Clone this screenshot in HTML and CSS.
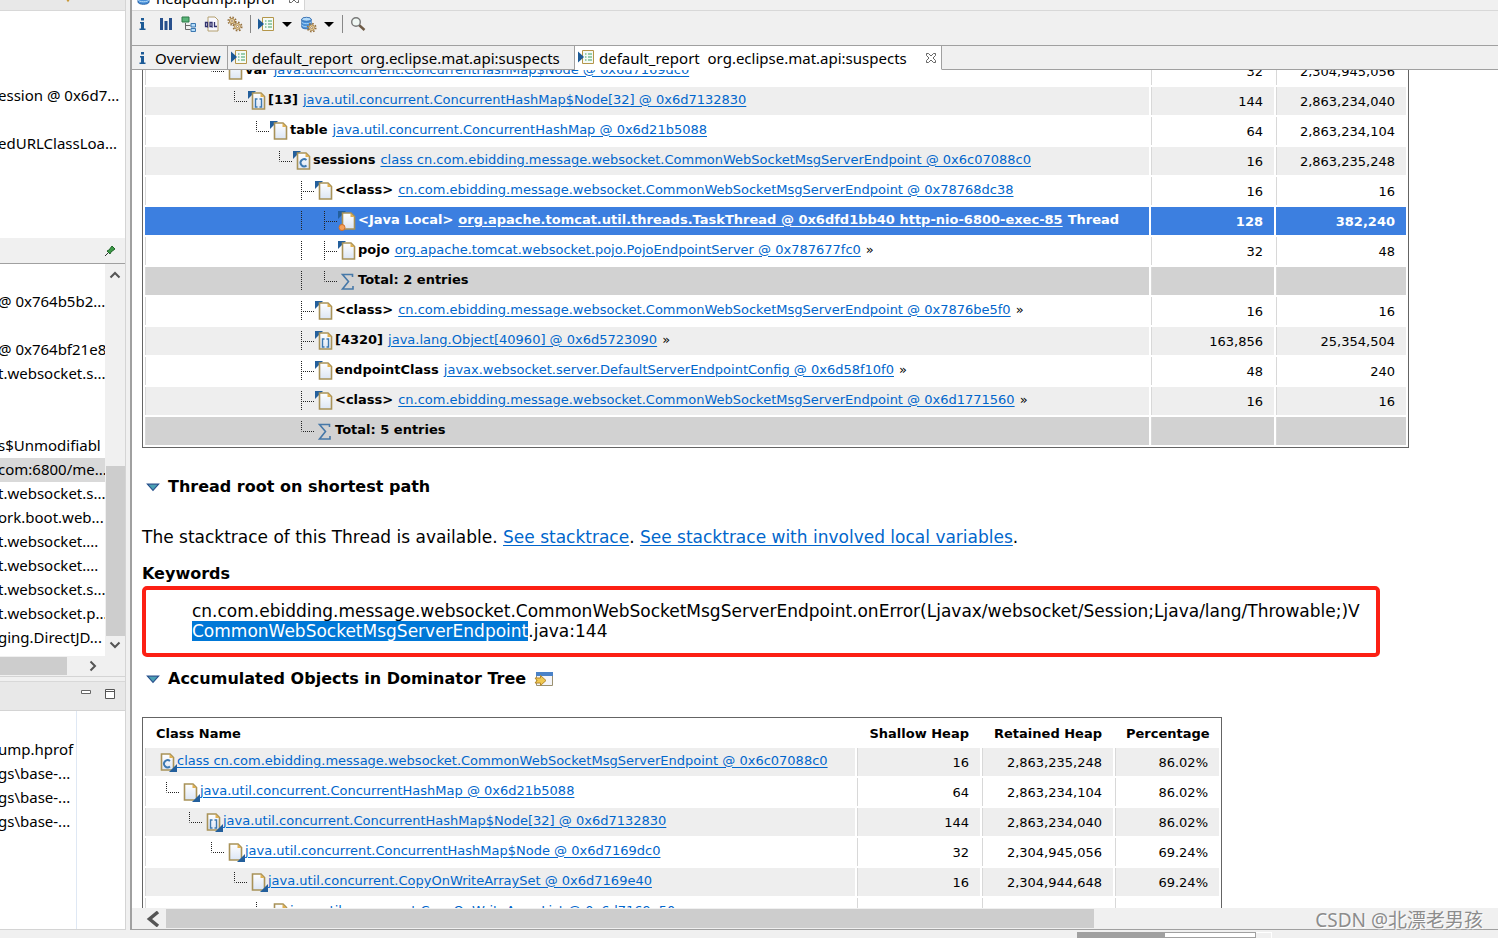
FILE: index.html
```html
<!DOCTYPE html>
<html lang="en">
<head>
<meta charset="utf-8">
<title>heapdump.hprof</title>
<link rel="stylesheet" href="styles.css">
</head>
<body>
<svg class="defs" aria-hidden="true">
  <defs>
    <linearGradient id="paper" x1="0" y1="0" x2="0" y2="1"><stop offset="0" stop-color="#fff"/><stop offset="1" stop-color="#dce6f5"/></linearGradient>
    <symbol id="page" viewBox="0 0 14 18"><path d="M1 1h8.500l3.500 3.500v12.500h-12z" fill="url(#paper)" stroke="#a89258" stroke-width="1.600"/><path d="M9 1v4h4z" fill="#e0b050"/></symbol>
    <symbol id="in" viewBox="0 0 20 20"><path d="M0 0h8L0 8z" fill="#235f9c"/><use href="#page" x="3" y="1" width="15" height="18"/></symbol>
    <symbol id="in-arr" viewBox="0 0 20 20"><use href="#in" width="20" height="20"/><path d="M9.500 8h-2v8h2M11.500 8h2v8h-2" fill="none" stroke="#3c78b0" stroke-width="1.400"/></symbol>
    <symbol id="in-cls" viewBox="0 0 20 20"><use href="#in" width="20" height="20"/><path d="M13.500 9a3.600 3.600 0 1 0 0 5.500" fill="none" stroke="#3c78b0" stroke-width="1.900"/></symbol>
    <symbol id="in-loc" viewBox="0 0 20 20"><use href="#in" width="20" height="20"/><circle cx="4" cy="16.500" r="3" fill="#f4a05a" stroke="#d0702a"/></symbol>
    <symbol id="out" viewBox="0 0 20 20"><use href="#page" x="3" y="1" width="15" height="18"/><path d="M20 12v8h-8z" fill="#235f9c"/></symbol>
    <symbol id="out-arr" viewBox="0 0 20 20"><use href="#out" width="20" height="20"/><path d="M9.500 8h-2v8h2M11.500 8h2v8h-2" fill="none" stroke="#3c78b0" stroke-width="1.400"/></symbol>
    <symbol id="out-cls" viewBox="0 0 20 20"><use href="#out" width="20" height="20"/><path d="M13 9a3.600 3.600 0 1 0 0 5.500" fill="none" stroke="#3c78b0" stroke-width="1.900"/></symbol>
    <symbol id="sum" viewBox="0 0 20 20"><path d="M14.500 6V3.500H4.500l6 7-6 7.500h10.500v-3" fill="none" stroke="#4678a8" stroke-width="1.600"/></symbol>
    <symbol id="ell" viewBox="0 0 14 20"><path d="M.5 0v10.500M2 10.500h12" fill="none" stroke="#222" stroke-dasharray="1 1"/></symbol>
    <symbol id="tee" viewBox="0 0 14 20"><path d="M.5 0v20M2 10.500h12" fill="none" stroke="#222" stroke-dasharray="1 1"/></symbol>
    <symbol id="bar" viewBox="0 0 23 20"><path d="M.5 0v20" fill="none" stroke="#222" stroke-dasharray="1 1"/></symbol>
    <symbol id="info" viewBox="0 0 16 16"><path d="M6 2h3v2.500H6zM5 6h4v6.500h1.500V14h-6v-1.500H6v-5H5z" fill="#1c5a96"/></symbol>
    <symbol id="report" viewBox="0 0 17 16"><path d="M4.500 1h11v13h-11z" fill="#f4faf6" stroke="#b4964a"/><path d="M0 2l6 5.500L0 13z" fill="#1c5a96"/><path d="M7 4.500h1.500M10 4.500h4M7 7.500h1.500M10 7.500h4M7 10.500h1.500M10 10.500h4" stroke="#3ca064"/></symbol>
    <symbol id="db" viewBox="0 0 16 16"><path d="M2 3v9c0 3 11 3 11 0V3" fill="#4a90d8" stroke="#2864aa"/><path d="M2 6c0 3 11 3 11 0M2 9.500c0 3 11 3 11 0" fill="none" stroke="#b4dcfa"/><ellipse cx="7.500" cy="3.200" rx="5.500" ry="2.300" fill="#b4dcfa" stroke="#2864aa"/></symbol>
    <symbol id="gear" viewBox="0 0 12 12"><circle cx="6" cy="6" r="4.600" fill="none" stroke="#96703c" stroke-width="1.800" stroke-dasharray="1.800 1.812"/><circle cx="6" cy="6" r="3.200" fill="#f0dcaa" stroke="#a0783c"/><circle cx="6" cy="6" r="1.200" fill="#fff" stroke="#8c643c" stroke-width=".8"/></symbol>
    <symbol id="close" viewBox="0 0 12 12"><path d="M1.500 1.500h2L6 4l2.500-2.500h2v2L8 6l2.500 2.500v2h-2L6 8l-2.500 2.500h-2v-2L4 6 1.500 3.500z" fill="#fff" stroke="#555" stroke-width=".9"/></symbol>
    <symbol id="twist" viewBox="0 0 12 8"><path d="M1 1h10L6 6.500z" fill="#4aa0b4" stroke="#28508c"/></symbol>
    <symbol id="chev" viewBox="0 0 12 12"><path d="M1.500 8.500L6 4l4.500 4.500" fill="none" stroke="#555" stroke-width="2"/></symbol>
  </defs>
</svg>
<div class="app">
  <aside class="side">
    <div class="side-cap"><svg class="cap-mark" viewBox="0 0 6 4"><path d="M1 0h4l-2 3z" fill="#c89632"/></svg></div>
    <ul class="list top-list">
      <li>ession @ 0x6d7...</li><li></li><li>edURLClassLoa...</li>
    </ul>
    <div class="side-bar"><button class="tool" aria-label="Pin"><svg class="i12" viewBox="0 0 12 12"><path d="M1 11l4-4" stroke="#333"/><path d="M3 6l2-1 3-4 3 3-4 3-1 2z" fill="#3c9a46" stroke="#1e6428"/></svg></button></div>
    <div class="tree">
      <ul class="list mid-list">
        <li>@ 0x764b5b2...</li><li></li><li>@ 0x764bf21e8</li><li>t.websocket.s...</li><li></li><li></li><li>s$Unmodifiabl</li><li class="on">com:6800/me...</li><li>t.websocket.s...</li><li>ork.boot.web...</li><li>t.websocket....</li><li>t.websocket....</li><li>t.websocket.s...</li><li>t.websocket.p...</li><li>ging.DirectJD...</li>
      </ul>
      <div class="vscroll"><svg class="i12"><use href="#chev"/></svg><div class="vthumb"></div><svg class="i12 down"><use href="#chev"/></svg></div>
    </div>
    <div class="hscroll"><div class="hthumb"></div><svg class="i12 right"><use href="#chev"/></svg></div>
    <div class="side-bar low">
      <button class="tool" aria-label="Minimize"><svg class="i12" viewBox="0 0 12 12"><path d="M1.500 2.500h9v3h-9z" fill="#fff" stroke="#666"/></svg></button>
      <button class="tool" aria-label="Maximize"><svg class="i12" viewBox="0 0 12 12"><path d="M1.500 1.500h9v9h-9zM1.500 3.500h9" fill="#fff" stroke="#555"/></svg></button>
    </div>
    <div class="files">
      <ul class="list low-list"><li>ump.hprof</li><li>gs\base-...</li><li>gs\base-...</li><li>gs\base-...</li></ul>
      <div></div>
    </div>
  </aside>
  <main class="main">
    <div class="editor-tabs">
      <div class="editor-tab"><svg class="i16"><use href="#db"/></svg><span>heapdump.hprof</span><svg class="i12"><use href="#close"/></svg></div>
    </div>
    <div class="toolbar">
      <button class="tool" aria-label="Overview"><svg class="i16"><use href="#info"/></svg></button>
      <button class="tool" aria-label="Histogram"><svg class="i16" viewBox="0 0 16 16"><path d="M2 2h3v12H2zM6.500 5h3v9h-3zM11 2h3v12h-3z" fill="#28508c"/></svg></button>
      <button class="tool" aria-label="Dominator tree"><svg class="i16" viewBox="0 0 16 16"><path d="M4.500 7v6.500h5M4.500 9.500h5" fill="none" stroke="#666"/><path d="M1 1h7v5H1z" fill="#5ab478" stroke="#2d7846"/><path d="M10 7.500h4.500V11H10zM10 12.500h4.500v3H10z" fill="#b4dcfa" stroke="#3c78b0"/></svg></button>
      <button class="tool" aria-label="OQL"><svg class="i16" viewBox="0 0 16 16"><path d="M4 1h7l3 3v11H4z" fill="#f8f8ff" stroke="#b4a06e"/><path d="M1.500 6.500h2v4h-2zM6 6.500h2v4H6zM3 10l1 1.500M7.500 10l1 1.500M10.500 6v4.500h2.500" fill="none" stroke="#32326e" stroke-width="1.300"/></svg></button>
      <button class="tool" aria-label="Thread overview"><svg class="i16" viewBox="0 0 16 16"><use href="#gear" width="10" height="10"/><use href="#gear" x="5" y="5" width="11" height="11"/></svg></button>
      <span class="sep"></span>
      <button class="tool wide" aria-label="Run report"><svg class="i17"><use href="#report"/></svg><i class="drop"></i></button>
      <button class="tool wide" aria-label="Query browser"><svg class="i17" viewBox="0 0 16 16"><use href="#db" width="13" height="14"/><use href="#gear" x="6" y="6" width="10" height="10"/></svg><i class="drop"></i></button>
      <span class="sep"></span>
      <button class="tool" aria-label="Search"><svg class="i16" viewBox="0 0 16 16"><path d="M9 9l5.500 5" stroke="#6e5a46" stroke-width="2.400"/><circle cx="6" cy="6" r="4.300" fill="#f0f8f4" stroke="#777" stroke-width="1.400"/></svg></button>
    </div>
    <div class="pages">
      <button class="page-tab first"><svg class="i16"><use href="#info"/></svg>Overview</button>
      <button class="page-tab report"><svg class="i17"><use href="#report"/></svg>default_report&nbsp; org.eclipse.mat.api:suspects</button>
      <button class="page-tab active"><svg class="i17"><use href="#report"/></svg>default_report&nbsp; org.eclipse.mat.api:suspects<svg class="i12"><use href="#close"/></svg></button>
      <span class="pages-rest"></span>
    </div>
    <div class="view">
      <div class="doc">
        <table class="data paths">
          <colgroup><col><col class="c-a"><col class="c-b"></colgroup>
          <tbody>
          <tr><td><div class="n"><span class="s3"></span><svg class="ln"><use href="#ell"/></svg><svg class="ic"><use href="#in"/></svg><b>var</b><a href="#">java.util.concurrent.ConcurrentHashMap$Node @ 0x6d7169dc0</a></div></td><td>32</td><td>2,304,945,056</td></tr>
          <tr class="alt"><td><div class="n"><span class="s4"></span><svg class="ln"><use href="#ell"/></svg><svg class="ic"><use href="#in-arr"/></svg><b>[13]</b><a href="#">java.util.concurrent.ConcurrentHashMap$Node[32] @ 0x6d7132830</a></div></td><td>144</td><td>2,863,234,040</td></tr>
          <tr><td><div class="n"><span class="s5"></span><svg class="ln"><use href="#ell"/></svg><svg class="ic"><use href="#in"/></svg><b>table</b><a href="#">java.util.concurrent.ConcurrentHashMap @ 0x6d21b5088</a></div></td><td>64</td><td>2,863,234,104</td></tr>
          <tr class="alt"><td><div class="n"><span class="s6"></span><svg class="ln"><use href="#ell"/></svg><svg class="ic"><use href="#in-cls"/></svg><b>sessions</b><a href="#">class cn.com.ebidding.message.websocket.CommonWebSocketMsgServerEndpoint @ 0x6c07088c0</a></div></td><td>16</td><td>2,863,235,248</td></tr>
          <tr><td><div class="n"><span class="s7"></span><svg class="ln"><use href="#tee"/></svg><svg class="ic"><use href="#in"/></svg><b>&lt;class&gt;</b><a href="#">cn.com.ebidding.message.websocket.CommonWebSocketMsgServerEndpoint @ 0x78768dc38</a></div></td><td>16</td><td>16</td></tr>
          <tr class="sel"><td><div class="n"><span class="s7"></span><svg class="br"><use href="#bar"/></svg><svg class="ln"><use href="#tee"/></svg><svg class="ic"><use href="#in-loc"/></svg><b>&lt;Java Local&gt;</b><a href="#">org.apache.tomcat.util.threads.TaskThread @ 0x6dfd1bb40 http-nio-6800-exec-85</a><b>Thread</b></div></td><td>128</td><td>382,240</td></tr>
          <tr><td><div class="n"><span class="s7"></span><svg class="br"><use href="#bar"/></svg><svg class="ln"><use href="#tee"/></svg><svg class="ic"><use href="#in"/></svg><b>pojo</b><a href="#">org.apache.tomcat.websocket.pojo.PojoEndpointServer @ 0x787677fc0</a><span>»</span></div></td><td>32</td><td>48</td></tr>
          <tr class="tot"><td><div class="n"><span class="s7"></span><svg class="br"><use href="#bar"/></svg><svg class="ln"><use href="#ell"/></svg><svg class="ic"><use href="#sum"/></svg><b>Total: 2 entries</b></div></td><td></td><td></td></tr>
          <tr><td><div class="n"><span class="s7"></span><svg class="ln"><use href="#tee"/></svg><svg class="ic"><use href="#in"/></svg><b>&lt;class&gt;</b><a href="#">cn.com.ebidding.message.websocket.CommonWebSocketMsgServerEndpoint @ 0x7876be5f0</a><span>»</span></div></td><td>16</td><td>16</td></tr>
          <tr class="alt"><td><div class="n"><span class="s7"></span><svg class="ln"><use href="#tee"/></svg><svg class="ic"><use href="#in-arr"/></svg><b>[4320]</b><a href="#">java.lang.Object[40960] @ 0x6d5723090</a><span>»</span></div></td><td>163,856</td><td>25,354,504</td></tr>
          <tr><td><div class="n"><span class="s7"></span><svg class="ln"><use href="#tee"/></svg><svg class="ic"><use href="#in"/></svg><b>endpointClass</b><a href="#">javax.websocket.server.DefaultServerEndpointConfig @ 0x6d58f10f0</a><span>»</span></div></td><td>48</td><td>240</td></tr>
          <tr class="alt"><td><div class="n"><span class="s7"></span><svg class="ln"><use href="#tee"/></svg><svg class="ic"><use href="#in"/></svg><b>&lt;class&gt;</b><a href="#">cn.com.ebidding.message.websocket.CommonWebSocketMsgServerEndpoint @ 0x6d1771560</a><span>»</span></div></td><td>16</td><td>16</td></tr>
          <tr class="tot"><td><div class="n"><span class="s7"></span><svg class="ln"><use href="#ell"/></svg><svg class="ic"><use href="#sum"/></svg><b>Total: 5 entries</b></div></td><td></td><td></td></tr>
          </tbody>
        </table>
        <h2><svg class="tw"><use href="#twist"/></svg>Thread root on shortest path</h2>
        <p>The stacktrace of this Thread is available. <a href="#">See stacktrace</a>. <a href="#">See stacktrace with involved local variables</a>.</p>
        <h3>Keywords</h3>
        <div class="keywords">cn.com.ebidding.message.websocket.CommonWebSocketMsgServerEndpoint.onError(Ljavax/websocket/Session;Ljava/lang/Throwable;)V<br><mark>CommonWebSocketMsgServerEndpoint</mark>.java:144</div>
        <h2 class="second"><svg class="tw"><use href="#twist"/></svg>Accumulated Objects in Dominator Tree <svg class="open" viewBox="0 0 20 18"><path d="M2.500 2.500h16v13h-16z" fill="#f4f4f8" stroke="#9a9070"/><path d="M2 2h17v4H2z" fill="#4a82c8"/><path d="M1 8h5.500V5.500l5.500 5-5.500 5V13H1l2-2.500z" fill="#f0c850" stroke="#b4882e"/></svg></h2>
        <table class="data acc">
          <colgroup><col><col class="c-a"><col class="c-c"><col class="c-d"></colgroup>
          <thead><tr><th>Class Name</th><th>Shallow Heap</th><th>Retained Heap</th><th>Percentage</th></tr></thead>
          <tbody>
          <tr class="alt"><td><div class="n"><span class="s0"></span><svg class="ic"><use href="#out-cls"/></svg><a href="#">class cn.com.ebidding.message.websocket.CommonWebSocketMsgServerEndpoint @ 0x6c07088c0</a></div></td><td>16</td><td>2,863,235,248</td><td>86.02%</td></tr>
          <tr><td><div class="n"><span class="s1"></span><svg class="ln"><use href="#ell"/></svg><svg class="ic"><use href="#out"/></svg><a href="#">java.util.concurrent.ConcurrentHashMap @ 0x6d21b5088</a></div></td><td>64</td><td>2,863,234,104</td><td>86.02%</td></tr>
          <tr class="alt"><td><div class="n"><span class="s2"></span><svg class="ln"><use href="#ell"/></svg><svg class="ic"><use href="#out-arr"/></svg><a href="#">java.util.concurrent.ConcurrentHashMap$Node[32] @ 0x6d7132830</a></div></td><td>144</td><td>2,863,234,040</td><td>86.02%</td></tr>
          <tr><td><div class="n"><span class="s3"></span><svg class="ln"><use href="#ell"/></svg><svg class="ic"><use href="#out"/></svg><a href="#">java.util.concurrent.ConcurrentHashMap$Node @ 0x6d7169dc0</a></div></td><td>32</td><td>2,304,945,056</td><td>69.24%</td></tr>
          <tr class="alt"><td><div class="n"><span class="s4"></span><svg class="ln"><use href="#ell"/></svg><svg class="ic"><use href="#out"/></svg><a href="#">java.util.concurrent.CopyOnWriteArraySet @ 0x6d7169e40</a></div></td><td>16</td><td>2,304,944,648</td><td>69.24%</td></tr>
          <tr><td><div class="n"><span class="s5"></span><svg class="ln"><use href="#ell"/></svg><svg class="ic"><use href="#out"/></svg><a href="#">java.util.concurrent.CopyOnWriteArrayList @ 0x6d7169e50</a></div></td><td></td><td></td><td></td></tr>
          </tbody>
        </table>
      </div>
    </div>
    <div class="main-scroll"><svg class="arrow" viewBox="0 0 14 16"><path d="M12 1L3.500 8l8.500 7" fill="none" stroke="#555" stroke-width="3.500"/></svg><div class="mthumb"></div></div>
  </main>
  <footer class="status"><div class="heap"><div class="heap-used"></div></div><div class="trash"></div></footer>
</div>
<div class="watermark">CSDN @北漂老男孩</div>
</body>
</html>
```
FILE: styles.css
```css
* { box-sizing: border-box; }
body { margin: 0; background: #f0f0f0; color: #000; font-family: "Noto Sans", sans-serif; font-size: 15px; }
.defs { position: absolute; width: 0; height: 0; }
svg { display: block; flex: none; }
ul { margin: 0; padding: 0; list-style: none; }
.app { display: grid; grid-template-columns: 126px minmax(0, 1fr); grid-template-rows: minmax(0, 1fr) 8px; column-gap: 4px; height: 100vh; overflow: hidden; }

.i12 { width: 12px; height: 12px; }
.i16 { width: 16px; height: 16px; }
.i17 { width: 17px; height: 17px; }
.tool { display: flex; align-items: center; gap: 6px; border: 0; padding: 0; background: none; }

.side { display: flex; flex-direction: column; min-height: 0; border-right: 1px solid #d4d4d4; }
.side-cap { height: 11px; border-bottom: 1px solid #d8d8d8; background: #e8e8e8; padding-left: 65px; }
.cap-mark { width: 6px; height: 3px; }
.list { background: #fff; overflow: hidden; text-indent: -2px; white-space: nowrap; }
.list li { height: 24px; line-height: 22px; }
.top-list { height: 227px; padding-top: 73px; }
.side-bar { display: flex; align-items: center; justify-content: flex-end; gap: 12px; height: 26px; padding-right: 9px; border-bottom: 1px solid #a0a0a0; }
.tree { display: flex; height: 392px; background: #fff; }
.mid-list { flex: 1; padding-top: 26px; min-width: 0; }
.list .on { background: #d9d9d9; }
.vscroll { display: flex; flex-direction: column; align-items: center; width: 20px; padding: 5px 0; background: #f0f0f0; }
.vthumb { width: 19px; height: 170px; margin: auto 0 3px; background: #cdcdcd; }
.down { transform: rotate(180deg); }
.right { transform: rotate(90deg); }
.hscroll { display: flex; align-items: center; justify-content: space-between; height: 21px; padding-right: 26px; border-bottom: 1px solid #d4d4d4; }
.hthumb { width: 67px; height: 18px; background: #cdcdcd; }
.low { height: 30px; margin-top: 4px; border-top: 1px solid #d8d8d8; border-bottom-color: #d4d4d4; background: #e8e8e8; padding-bottom: 4px; }
.files { display: grid; grid-template-columns: 77px 1fr; flex: 1; background: #fff; border-bottom: 1px solid #d4d4d4; }
.low-list { padding-top: 27px; border-right: 1px solid #dfe8f4; }

.main { display: flex; flex-direction: column; min-width: 0; min-height: 0; border-left: 2px solid #a0a0a0; border-bottom: 1px solid #a0a0a0; }
.editor-tabs { display: flex; align-items: flex-end; height: 11px; border-bottom: 1px solid #d8d8d8; overflow: hidden; }
.editor-tab { display: flex; align-items: center; gap: 4px; height: 24px; width: 173px; padding: 0 4px; background: #fff; border-right: 1px solid #d4d4d4; font-size: 15px; }
.editor-tab .i12 { margin-left: auto; }
.toolbar { display: flex; align-items: center; gap: 7px; height: 34px; padding: 0 3px 8px; }
.wide { margin-right: 1px; gap: 7px; }
.sep { width: 1px; height: 18px; background: #888; }
.drop { border: 5px solid transparent; border-top-color: #000; border-bottom: 0; }
.pages { display: flex; height: 25px; }
.page-tab { display: flex; align-items: center; gap: 4px; padding: 0 4px 0 3px; border: 1px solid #a0a0a0; border-left: 0; background: #f0f0f0; color: #000; font: inherit; white-space: nowrap; }
.first { width: 96px; }
.report { width: 347px; }
.page-tab.active { width: 367px; background: #fff; border-bottom-color: #fff; }
.active .i12 { margin-left: auto; }
.pages-rest { flex: 1; border-bottom: 1px solid #a0a0a0; border-top: 1px solid #a0a0a0; }

.view { flex: 1; min-height: 0; overflow: hidden; background: #fff; font-family: "DejaVu Sans", Verdana, sans-serif; }
.doc { padding: 0 10px; margin-top: -16px; }
.doc a { color: #0066cc; text-decoration: underline; text-underline-offset: 2px; }
.data { table-layout: fixed; border: 1px solid #646464; border-collapse: separate; border-spacing: 2px; font-size: 13px; background: #fff; }
.paths { width: 1267px; }
.acc { width: 1080px; }
.c-a { width: 123px; }
.c-b { width: 130px; }
.c-c { width: 131px; }
.c-d { width: 104px; }
.data td { height: 28px; padding: 0 11px 0 0; border-left: 1px solid #d8d8d8; text-align: right; white-space: nowrap; }
.data td:first-child { padding: 0; overflow: hidden; }
.data th { height: 26px; padding: 0 11px; text-align: right; white-space: nowrap; }
.data th:first-child { text-align: left; }
.alt td { background: #eee; }
.tot td { background: #d2d2d2; }
.sel td { background: #3c7fe0; color: #fff; font-weight: bold; }
.data .sel td { border-left-color: #3c7fe0; }
.doc .sel a { color: #fff; }
.n { display: flex; align-items: center; height: 28px; padding-bottom: 4px; }
.n a + span, .n a + b, .n b + a { margin-left: 5px; }
.n span { flex: none; }
.ln { width: 14px; height: 20px; align-self: flex-end; }
.br { width: 23px; height: 20px; align-self: flex-end; }
.ic { width: 20px; height: 20px; align-self: flex-end; }
.s0 { width: 11px; }
.s1 { width: 20px; }
.s2 { width: 43px; }
.s3 { width: 65px; }
.s4 { width: 88px; }
.s5 { width: 110px; }
.s6 { width: 133px; }
.s7 { width: 155px; }
h2 { display: flex; align-items: center; gap: 8px; margin: 29px 0 30px; padding-left: 4px; font-size: 16px; line-height: 20px; }
.tw { width: 14px; height: 9px; }
.open { width: 20px; height: 18px; }
p { margin: 0; font-size: 17px; line-height: 20px; }
h3 { margin: 17px 0 2px; font-size: 16px; line-height: 20px; }
.keywords { width: 1238px; height: 71px; padding: 11px 0 0 46px; border: 4px solid #fc2014; border-radius: 5px; font-size: 17px; line-height: 20px; white-space: nowrap; }
mark { background: #0078d7; color: #fff; }
h2.second { margin: 12px 0 28px; }

.main-scroll { display: flex; align-items: center; height: 21px; padding-left: 14px; background: #f0f0f0; }
.arrow { width: 14px; height: 16px; margin-right: 6px; }
.mthumb { width: 928px; height: 19px; background: #cdcdcd; }
.status { grid-column: 1 / -1; display: flex; justify-content: flex-end; padding: 2px 226px 0 0; }
.heap { width: 179px; border: 1px solid #a0a0a0; background: #fff; }
.heap-used { width: 87px; height: 6px; background: #a0a0a0; }
.trash { width: 16px; border-top: 1px solid #fff; border-right: 1px solid #fff; }
.watermark { position: absolute; right: 15px; bottom: 4px; color: #8c8c8c; font-family: "Noto Sans", "Noto Sans CJK SC", sans-serif; font-size: 19px; line-height: 28px; text-shadow: 1px 1px 0 #fff; }
```
